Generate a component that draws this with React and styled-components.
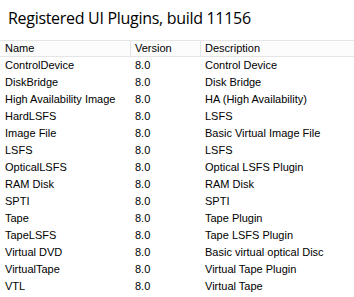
import React from "react";
import styled, { createGlobalStyle } from "styled-components";

const Global = createGlobalStyle`
  html, body { margin: 0; padding: 0; background: #fff; }
  body { width: 354px; height: 297px; overflow: hidden; }
`;

const plugins = [
  ["ControlDevice", "8.0", "Control Device"],
  ["DiskBridge", "8.0", "Disk Bridge"],
  ["High Availability Image", "8.0", "HA (High Availability)"],
  ["HardLSFS", "8.0", "LSFS"],
  ["Image File", "8.0", "Basic Virtual Image File"],
  ["LSFS", "8.0", "LSFS"],
  ["OpticalLSFS", "8.0", "Optical LSFS Plugin"],
  ["RAM Disk", "8.0", "RAM Disk"],
  ["SPTI", "8.0", "SPTI"],
  ["Tape", "8.0", "Tape Plugin"],
  ["TapeLSFS", "8.0", "Tape LSFS Plugin"],
  ["Virtual DVD", "8.0", "Basic virtual optical Disc"],
  ["VirtualTape", "8.0", "Virtual Tape Plugin"],
  ["VTL", "8.0", "Virtual Tape"],
];

const Page = styled.div`
  display: flex;
  flex-direction: column;
  width: 354px;
  height: 297px;
  background: #fff;
`;

const Title = styled.h1`
  margin: 0;
  padding: 7px 0 0 8px;
  height: 40px;
  box-sizing: border-box;
  font-family: "Open Sans", "Noto Sans", sans-serif;
  font-weight: 400;
  font-size: 16px;
  letter-spacing: -0.3px;
  line-height: 22px;
  color: #000;
`;

const Grid = styled.div`
  display: grid;
  grid-template-columns: 130px 70px 1fr;
  font-family: "Liberation Sans", Arial, sans-serif;
  font-size: 11px;
  color: #000;
`;

const HeadCell = styled.div`
  height: 15px;
  line-height: 15px;
  padding-left: ${(p) => (p.$first ? 5 : 4)}px;
  background: #fcfcfc;
  border-top: 1px solid #e5e5e5;
  border-bottom: 1px solid #e5e5e5;
  border-left: ${(p) => (p.$first ? "none" : "1px solid #e5e5e5")};
  white-space: nowrap;
`;

const Cell = styled.div`
  height: 17px;
  line-height: 17px;
  padding-left: 5px;
  white-space: nowrap;
  overflow: hidden;
`;

export default function App() {
  return (
    <Page>
      <Global />
      <Title>Registered UI Plugins, build 11156</Title>
      <Grid>
        <HeadCell $first>Name</HeadCell>
        <HeadCell>Version</HeadCell>
        <HeadCell>Description</HeadCell>
        {plugins.map(([name, ver, desc]) => (
          <React.Fragment key={name}>
            <Cell>{name}</Cell>
            <Cell>{ver}</Cell>
            <Cell>{desc}</Cell>
          </React.Fragment>
        ))}
      </Grid>
    </Page>
  );
}
